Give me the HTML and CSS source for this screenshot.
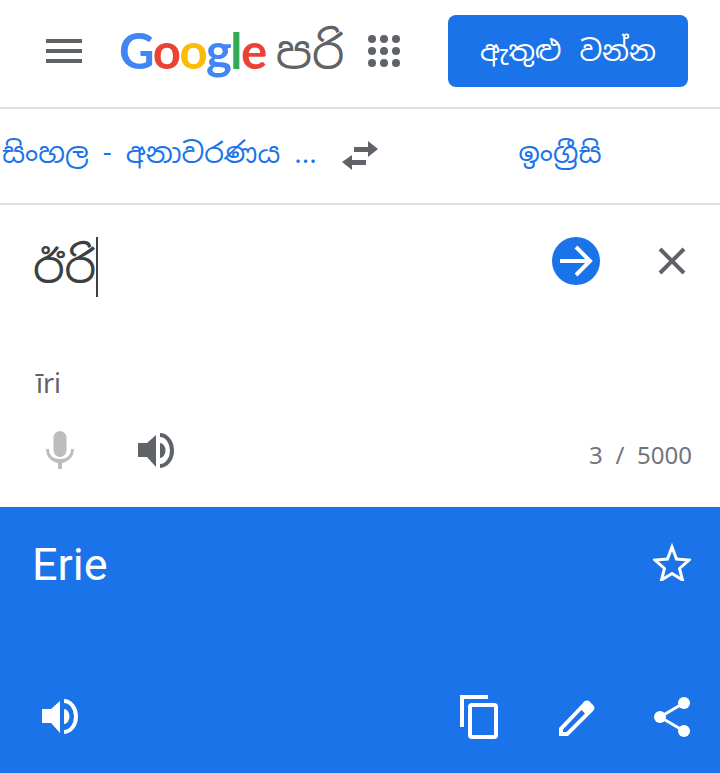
FILE: index.html
```html
<!DOCTYPE html>
<html lang="si">
<head>
<meta charset="utf-8">
<title>Google පරිවර්තනය</title>
<link rel="stylesheet" href="styles.css">
</head>
<body>
<div class="app">
  <header class="topbar">
    <svg class="menu" width="36" height="24" viewBox="0 0 36 24"><path d="M0 0h36v4H0zM0 10h36v4H0zM0 20h36v4H0z" fill="#5f6368"/></svg>
    <div class="brand">
      <span class="logo"><span class="b">G</span><span class="r">o</span><span class="y">o</span><span class="b">g</span><span class="g">l</span><span class="r">e</span></span>
      <span class="product">පරිවර්තනය</span>
    </div>
    <svg class="apps" width="32" height="32" viewBox="0 0 32 32" fill="#5f6368">
      <circle cx="4" cy="4" r="4"/><circle cx="16" cy="4" r="4"/><circle cx="28" cy="4" r="4"/>
      <circle cx="4" cy="16" r="4"/><circle cx="16" cy="16" r="4"/><circle cx="28" cy="16" r="4"/>
      <circle cx="4" cy="28" r="4"/><circle cx="16" cy="28" r="4"/><circle cx="28" cy="28" r="4"/>
    </svg>
    <button class="signin">ඇතුළු වන්න</button>
  </header>
  <nav class="langs">
    <div class="lang from">සිංහල - අනාවරණය ...</div>
    <svg class="swap" width="36" height="30" viewBox="0 0 36 30" fill="#5f6368"><path d="M26 0l10 8-10 8v-5H12V6h14zM10 14v5h14v5H10v5L0 21z"/></svg>
    <div class="lang to">ඉංග්‍රීසි</div>
  </nav>
  <section class="source">
    <div class="input-row">
      <div class="entry"><span class="typed">ඊරි</span><span class="caret"></span></div>
      <svg class="go" width="48" height="48" viewBox="0 0 48 48"><circle cx="24" cy="24" r="24" fill="#1a73e8"/><path d="M8 24h30M24 10l14 14-14 14" fill="none" stroke="#fff" stroke-width="4"/></svg>
      <svg class="clear" width="28" height="28" viewBox="0 0 28 28"><path d="M2 2l24 24M26 2L2 26" stroke="#5f6368" stroke-width="4" fill="none"/></svg>
    </div>
    <div class="translit">īri</div>
    <div class="source-tools">
      <svg class="mic" width="28" height="38" viewBox="0 0 28 38" fill="#bdbdbd"><rect x="7.500" y="0" width="13" height="26" rx="6.500"/><path d="M0 18h3c0 7 5 10 11 10s11-3 11-10h3c0 8-6 13-12 14v6h-4v-6C6 31 0 26 0 18z"/></svg>
      <svg class="speak" width="38" height="36" viewBox="0 0 38 36" fill="#5f6368"><path d="M1 10h9L19 2v32L10 24H1zM23 0A14 17.500 0 0 1 23 35V31A10 13.500 0 0 0 23 4zM23 10a5.500 7.500 0 0 1 0 15z"/></svg>
      <div class="count">3 / 5000</div>
    </div>
  </section>
  <section class="result">
    <div class="result-top">
      <div class="output">Erie</div>
      <svg class="star" width="38" height="38" viewBox="0 0 38 38"><path d="M19 4l4.500 12 12.500 1-9.500 8.500 3 11.500L19 30.500 8.500 37l3-11.500L2 17l12.500-1z" fill="none" stroke="#fff" stroke-width="3"/></svg>
    </div>
    <div class="result-tools">
      <svg class="speak" width="38" height="36" viewBox="0 0 38 36" fill="#fff"><path d="M1 10h9L19 2v32L10 24H1zM23 0A14 17.500 0 0 1 23 35V31A10 13.500 0 0 0 23 4zM23 10a5.500 7.500 0 0 1 0 15z"/></svg>
      <div class="spacer"></div>
      <svg class="copy" width="38" height="44" viewBox="0 0 38 44" fill="none" stroke="#fff" stroke-width="4"><path d="M2 32V2h26"/><rect x="10" y="10" width="26" height="32" rx="2"/></svg>
      <svg class="edit" width="36" height="37" viewBox="0 0 36 37" fill="#fff" fill-rule="evenodd"><path d="M0 29L24 4C26 1 29 1 31 3L34 6C36 8 36 10 34 12L9 37H0zM4 30.500V33H7.500L26 14.500L22.500 11z"/></svg>
      <svg class="share" width="36" height="40" viewBox="0 0 36 40" fill="#fff"><circle cx="30" cy="6" r="6"/><circle cx="6" cy="20" r="6"/><circle cx="30" cy="34" r="6"/><path d="M6 20L30 6M6 20l24 14" stroke="#fff" stroke-width="3"/></svg>
    </div>
  </section>
</div>
</body>
</html>
```
FILE: styles.css
```css
* { box-sizing: border-box; }
html, body { margin: 0; padding: 0; }
body { font-family: "Noto Sans Sinhala", Roboto, "Noto Sans", sans-serif; background: #fff; }
.app { width: 720px; height: 773px; display: flex; flex-direction: column; overflow: hidden; }
.topbar { height: 109px; border-bottom: 2px solid #e0e0e0; display: flex; align-items: center; padding: 0 32px 6px 46px; }
.menu { flex: none; margin-right: 37px; }
.brand { width: 224px; display: flex; align-items: baseline; overflow: hidden; gap: 10px; }
.logo { font: 700 49px/60px Lato, sans-serif; letter-spacing: -1.500px; }
.b { color: #4285f4; } .r { color: #ea4335; } .y { color: #fbbc05; } .g { color: #34a853; }
.product { font-size: 46px; line-height: 60px; color: #5f6368; white-space: nowrap; }
.apps { flex: none; margin-left: 25px; }
.signin { margin-left: auto; width: 240px; height: 72px; background: #1a73e8; color: #fff; border: 0; border-radius: 8px; font: 400 28px/40px "Noto Sans Sinhala", Roboto, "Noto Sans", sans-serif; padding: 0; white-space: pre; word-spacing: 4px; }
.langs { height: 96px; border-bottom: 2px solid #e0e0e0; display: flex; align-items: center; }
.lang { color: #1a73e8; font-size: 28px; white-space: nowrap; margin-bottom: 6px; }
.from { width: 342px; padding-left: 2px; }
.swap { flex: none; }
.to { flex: 1; text-align: center; padding-left: 22px; }
.source { height: 302px; padding: 0 28px 0 33px; display: flex; flex-direction: column; }
.input-row { height: 112px; display: flex; align-items: center; }
.entry { flex: 1; display: flex; align-items: center; height: 60px; margin-top: 12px; }
.typed { font-size: 45px; line-height: 60px; color: #3c4043; }
.caret { width: 2px; height: 60px; background: #3c4043; }
.go { flex: none; margin-right: 58px; }
.clear { flex: none; margin-right: 6px; }
.translit { margin-top: 49px; font-size: 27px; line-height: 36px; color: #5f6368; padding-left: 3px; }
.source-tools { display: flex; align-items: center; margin-top: 29px; }
.mic { margin-left: 13px; margin-top: -2px; }
.source-tools .speak { margin-left: 63px; }
.count { margin-left: auto; margin-top: 8px; font: 400 24px/32px "Noto Sans", sans-serif; color: #70757a; word-spacing: 6.500px; }
.result { flex: 1; background: #1a73e8; color: #fff; padding: 0 29px 0 32px; display: flex; flex-direction: column; }
.result-top { display: flex; justify-content: space-between; height: 188px; padding-top: 30px; }
.output { font: 400 45px/56px Roboto, sans-serif; }
.star { margin-top: 6px; }
.result-tools { display: flex; align-items: center; padding: 0 1px 0 9px; }
.spacer { flex: 1; }
.copy { margin-right: 61px; }
.edit { margin-right: 59px; }
```
